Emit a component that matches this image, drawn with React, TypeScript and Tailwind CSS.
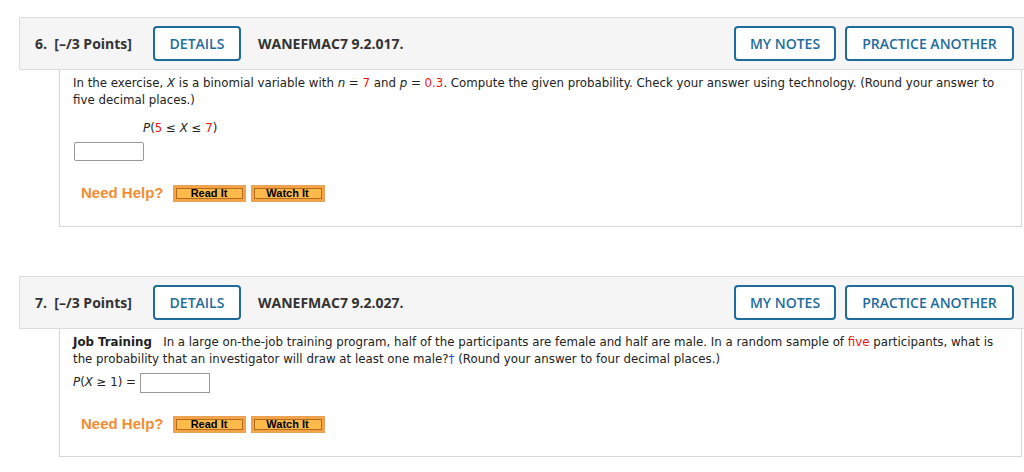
import React from "react"

const headFont = { fontFamily: '"Open Sans", "Noto Sans", sans-serif' }
const bodyFont = { fontFamily: '"DejaVu Sans", Verdana, sans-serif' }
const helpFont = { fontFamily: '"Liberation Sans", Arial, sans-serif' }

function BlueButton({ children, className = "" }: { children: React.ReactNode; className?: string }) {
  return (
    <div className={"h-[35px] flex items-center justify-center rounded-[4px] border-2 border-[#1f6c9c] bg-white text-[#1f6c9c] text-[14px] font-semibold " + className}>
      {children}
    </div>
  )
}

function HelpButton({ children, w }: { children: React.ReactNode; w: string }) {
  return (
    <div className={"h-[17px] p-[2px] bg-[#f4a346] border border-[#e7a25a] " + w} style={helpFont}>
      <div className="h-full flex items-center justify-center bg-[#fdba4b] border border-[#b66b1a] text-[11px] font-bold text-black leading-none">
        {children}
      </div>
    </div>
  )
}

function Header({ num, code }: { num: string; code: string }) {
  return (
    <div className="ml-[19px] h-[53px] bg-[#f5f5f5] border-t border-l border-b border-[#dcdcdc] flex items-center pl-[15px] pr-[10px]" style={headFont}>
      <span className="text-[14px] font-bold text-[#333] w-[118px]">{num}.&nbsp; [–/3 Points]</span>
      <BlueButton className="w-[88px]">DETAILS</BlueButton>
      <span className="ml-[17px] text-[14px] font-bold text-[#333]">{code}</span>
      <div className="ml-auto flex gap-[9px]">
        <BlueButton className="w-[102px]">MY NOTES</BlueButton>
        <BlueButton className="w-[169px]">PRACTICE ANOTHER</BlueButton>
      </div>
    </div>
  )
}

function NeedHelp() {
  return (
    <div className="flex items-center pl-[8px]">
      <span className="text-[15px] font-bold text-[#f58c32] mr-[9px]" style={helpFont}>Need Help?</span>
      <HelpButton w="w-[73px]">Read It</HelpButton>
      <div className="w-[5px]" />
      <HelpButton w="w-[74px]">Watch It</HelpButton>
    </div>
  )
}

const red = "text-[#e8160c]"

export default function App() {
  return (
    <div className="w-[1024px] h-[472px] bg-white pt-[17px] overflow-hidden text-[#222]">
      <Header num="6" code="WANEFMAC7 9.2.017." />
      <div className="ml-[59px] mr-[2px] h-[157px] border-l border-r border-b border-[#d6d6d6] pl-[13px] pr-[20px] pt-[5px]" style={bodyFont}>
        <p className="text-[11.8px] leading-[17px]">
          In the exercise, <i>X</i> is a binomial variable with <i>n</i> = <span className={red}>7</span> and <i>p</i> = <span className={red}>0.3</span>. Compute the given probability. Check your answer using technology. (Round your answer to five decimal places.)
        </p>
        <p className="text-[11.8px] leading-[17px] mt-[11px] ml-[70px]">
          <i>P</i>(<span className={red}>5</span> ≤ <i>X</i> ≤ <span className={red}>7</span>)
        </p>
        <div className="mt-[5px] ml-[1px] w-[70px] h-[19px] border border-[#999] rounded-[2px] bg-white" />
        <div className="mt-[21px]">
          <NeedHelp />
        </div>
      </div>

      <div className="h-[49px]" />

      <Header num="7" code="WANEFMAC7 9.2.027." />
      <div className="ml-[59px] mr-[2px] h-[128px] border-l border-r border-b border-[#d6d6d6] pl-[13px] pr-[24px] pt-[5px]" style={bodyFont}>
        <p className="text-[11.8px] leading-[17px]">
          <b>Job Training</b>&nbsp;&nbsp; In a large on-the-job training program, half of the participants are female and half are male. In a random sample of <span className={red}>five</span> participants, what is the probability that an investigator will draw at least one male?<span className="text-[#1d4fd8]">†</span> (Round your answer to four decimal places.)
        </p>
        <div className="mt-[5px] flex items-center text-[11.8px]">
          <span><i>P</i>(<i>X</i> ≥ 1) =&nbsp;</span>
          <div className="w-[70px] h-[20px] border border-[#999] bg-white" />
        </div>
        <div className="mt-[20px]">
          <NeedHelp />
        </div>
      </div>
    </div>
  )
}
